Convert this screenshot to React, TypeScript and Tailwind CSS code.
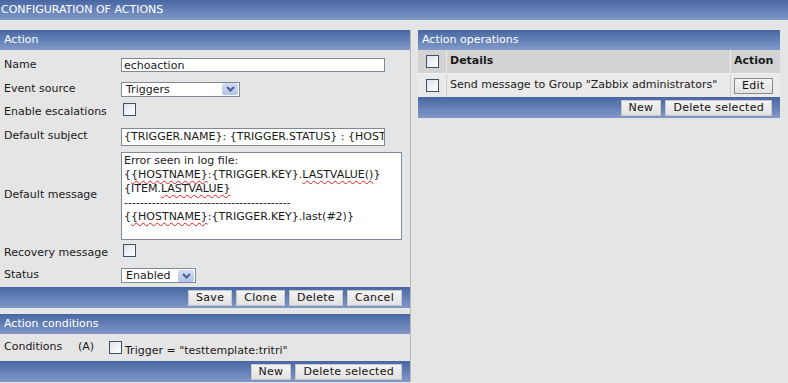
import React from "react";

const font = { fontFamily: '"DejaVu Sans", Verdana, sans-serif' };

function Header({ title }: { title: string }) {
  return (
    <div className="h-[20px] pl-[4px] leading-[20px] text-white bg-gradient-to-b from-[#4867a3] to-[#8199c8]">
      {title}
    </div>
  );
}

function Footer({ children }: { children: React.ReactNode }) {
  return (
    <div className="flex h-[21px] items-center justify-end gap-[4px] pr-[8px] bg-gradient-to-b from-[#4867a3] to-[#8199c8]">
      {children}
    </div>
  );
}

function Btn({ label, edit }: { label: string; edit?: boolean }) {
  return (
    <span
      className={
        "flex h-[16px] items-center px-[7px] leading-none text-[#111] tracking-[0.3px] bg-gradient-to-b from-[#f4f4f4] to-[#e2e2e2] " +
        (edit ? "border border-[#8a8a8a]" : "border border-[#c8c8c8]")
      }
    >
      {label}
    </span>
  );
}

function Check() {
  return (
    <span className="inline-block h-[13px] w-[13px] shrink-0 border border-[#3f5068] bg-gradient-to-br from-[#dde3ea] to-white" />
  );
}

function Select({ value, width }: { value: string; width: string }) {
  return (
    <div className={"flex h-[15px] items-center justify-between border border-[#7f8a99] bg-white pl-[4px] pr-[1px] " + width}>
      <span className="leading-none">{value}</span>
      <span className="flex h-[12px] w-[16px] items-center justify-center rounded-[2px] bg-gradient-to-b from-[#d3def7] to-[#b2c4ec]">
        <svg width="9" height="6" viewBox="0 0 9 6">
          <path d="M1 1 L4.5 4.5 L8 1" stroke="#4d5f8a" strokeWidth="2" fill="none" />
        </svg>
      </span>
    </div>
  );
}

function Row({ label, h, children }: { label: string; h: string; children?: React.ReactNode }) {
  return (
    <div className={"flex items-center " + h}>
      <div className="w-[121px] shrink-0 pl-[4px]">{label}</div>
      <div className="flex items-center">{children}</div>
    </div>
  );
}

const wavy = "underline decoration-wavy decoration-[#e02020] decoration-1 underline-offset-2";

export default function App() {
  return (
    <div style={font} className="h-[383px] w-[788px] overflow-hidden bg-[#e5e5e5] text-[11px] text-[#1a1a1a]">
      <div className="h-[20px] pl-[1px] leading-[20px] text-white bg-gradient-to-b from-[#4867a3] to-[#8199c8]">
        CONFIGURATION OF ACTIONS
      </div>

      <div className="flex pt-[10px]">
        <div className="flex w-[411px] flex-col border-r border-[#b9b9b9]">
          <Header title="Action" />
          <div className="pt-[3px]">
            <Row label="Name" h="h-[24px]">
              <div className="flex h-[14px] w-[264px] items-center border border-[#7f8a99] bg-white pl-[2px] leading-none">
                echoaction
              </div>
            </Row>
            <Row label="Event source" h="h-[24px]">
              <Select value="Triggers" width="w-[119px]" />
            </Row>
            <Row label="Enable escalations" h="h-[23px]">
              <span className="ml-[2px]">
                <Check />
              </span>
            </Row>
            <Row label="Default subject" h="h-[25px]">
              <div className="flex h-[18px] w-[264px] items-center overflow-hidden whitespace-nowrap border border-[#7f8a99] bg-white pl-[2px] leading-none">
                {"{TRIGGER.NAME}: {TRIGGER.STATUS} : {HOST"}
              </div>
            </Row>
            <Row label="Default message" h="h-[93px]">
              <div className="h-[88px] w-[281px] border border-[#7f8a99] bg-white pl-[2px] pt-[1px] leading-[14px]">
                <div>Error seen in log file:</div>
                <div>
                  {"{"}
                  <span className={wavy}>{"{HOSTNAME}"}</span>
                  {":{TRIGGER.KEY}."}
                  <span className={wavy}>{"LASTVALUE()"}</span>
                  {"}"}
                </div>
                <div>
                  {"{ITEM."}
                  <span className={wavy}>{"LASTVALUE}"}</span>
                </div>
                <div>------------------------------------------</div>
                <div>
                  {"{"}
                  <span className={wavy}>{"{HOSTNAME}"}</span>
                  {":{TRIGGER.KEY}.last(#2)}"}
                </div>
              </div>
            </Row>
            <Row label="Recovery message" h="h-[22px]">
              <span className="ml-[2px]">
                <Check />
              </span>
            </Row>
            <Row label="Status" h="h-[23px]">
              <Select value="Enabled" width="w-[75px]" />
            </Row>
          </div>
          <Footer>
            <Btn label="Save" />
            <Btn label="Clone" />
            <Btn label="Delete" />
            <Btn label="Cancel" />
          </Footer>

          <div className="h-[6px] bg-[#e5e5e5]" />
          <Header title="Action conditions" />
          <div className="flex h-[27px] items-center pl-[4px]">
            <span className="w-[74px]">Conditions</span>
            <span className="w-[31px]">(A)</span>
            <Check />
            <span className="ml-[3px] mt-[7px]">Trigger = "testtemplate:tritri"</span>
          </div>
          <Footer>
            <Btn label="New" />
            <Btn label="Delete selected" />
          </Footer>
        </div>

        <div className="ml-[7px] flex w-[362px] flex-col self-start">
          <Header title="Action operations" />
          <div className="flex h-[24px] items-center border-b border-[#f0f0f0] bg-[#d3d3d3]">
            <div className="flex h-full w-[29px] items-center justify-center border-r border-[#ececec] pl-[1px]">
              <Check />
            </div>
            <div className="flex h-full flex-1 items-center pl-[3px] font-bold">Details</div>
            <div className="flex h-full w-[50px] items-center border-l border-[#ececec] pl-[3px] font-bold">Action</div>
          </div>
          <div className="flex h-[23px] items-center bg-[#eaeaea]">
            <div className="flex h-full w-[29px] items-center justify-center border-r border-[#d0d0d0] pl-[1px]">
              <Check />
            </div>
            <div className="flex h-full flex-1 items-center pl-[3px] whitespace-nowrap">
              Send message to Group "Zabbix administrators"
            </div>
            <div className="flex h-full w-[50px] items-center border-l border-[#d0d0d0] pl-[3px]">
              <Btn label="Edit" edit />
            </div>
          </div>
          <Footer>
            <Btn label="New" />
            <Btn label="Delete selected" />
          </Footer>
        </div>
      </div>
    </div>
  );
}
